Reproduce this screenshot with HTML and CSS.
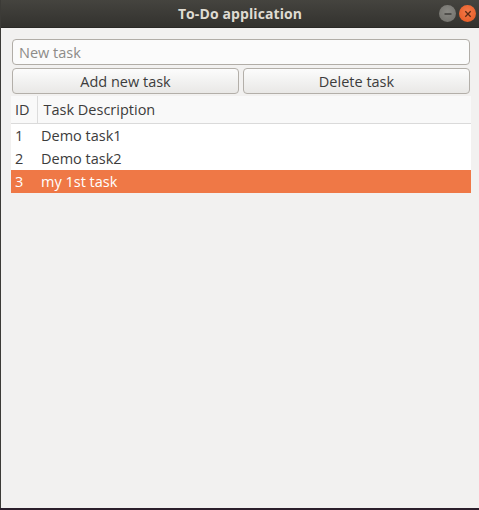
FILE: index.html
```html
<!DOCTYPE html>
<html>
<head>
<meta charset="utf-8">
<link rel="stylesheet" href="styles.css">
</head>
<body>
<div class="window">
  <header class="titlebar">
    <span class="title">To-Do application</span>
    <div class="controls">
      <span class="wbtn min"><svg width="16" height="16" viewBox="0 0 16 16"><line x1="4.5" y1="8" x2="11.5" y2="8" stroke="#3a3935" stroke-width="1.4"/></svg></span>
      <span class="wbtn close"><svg width="16" height="16" viewBox="0 0 16 16"><path d="M5.3 5.3L10.7 10.7M10.7 5.3L5.3 10.7" stroke="#5a2a14" stroke-width="1.3"/></svg></span>
    </div>
  </header>
  <main class="content">
    <input class="task-input" type="text" placeholder="New task">
    <div class="actions">
      <button class="action">Add new task</button>
      <button class="action">Delete task</button>
    </div>
    <table class="tasks">
      <thead>
        <tr><th class="col-id">ID</th><th class="col-desc">Task Description</th></tr>
      </thead>
      <tbody>
        <tr><td class="col-id">1</td><td class="col-desc">Demo task1</td></tr>
        <tr><td class="col-id">2</td><td class="col-desc">Demo task2</td></tr>
        <tr class="selected"><td class="col-id">3</td><td class="col-desc">my 1st task</td></tr>
      </tbody>
    </table>
  </main>
</div>
</body>
</html>
```

FILE: styles.css
```css
html, body {
  margin: 0;
  padding: 0;
  background: #2b1f2b;
}
.window {
  width: 479px;
  height: 508px;
  display: flex;
  flex-direction: column;
  background: #f2f1f0;
  font-family: "Open Sans", "Noto Sans", sans-serif;
  border-left: 1px solid #3c3b37;
  box-sizing: border-box;
}
.titlebar {
  height: 28px;
  flex: none;
  position: relative;
  display: flex;
  align-items: center;
  justify-content: center;
  background: linear-gradient(#45443f, #3a3935 60%, #33322e);
  border-bottom: 1px solid #2a2926;
  box-sizing: border-box;
}
.title {
  color: #dfdbd2;
  font-weight: bold;
  font-size: 14px;
  letter-spacing: 0.1px;
}
.controls {
  position: absolute;
  right: 3px;
  top: 5px;
  display: flex;
  gap: 3px;
}
.wbtn {
  width: 17px;
  height: 17px;
  border-radius: 50%;
  display: flex;
  align-items: center;
  justify-content: center;
}
.wbtn.min {
  background: radial-gradient(circle at 50% 40%, #8a8984, #6e6d68);
}
.wbtn.close {
  background: radial-gradient(circle at 50% 40%, #f47a4a, #e4561f);
}
.content {
  flex: 1;
  padding: 11px 8px 0 10px;
  display: flex;
  flex-direction: column;
}
.task-input {
  margin: 0 1px 0 1px;
  height: 26px;
  box-sizing: border-box;
  border: 1px solid #b1ada7;
  border-radius: 4px;
  background: #fbfbfb;
  padding: 0 6px;
  font-family: inherit;
  font-size: 14.5px;
  color: #3c3c3c;
}
.task-input::placeholder {
  color: #8d8b88;
}
.actions {
  margin: 3px 1px 0 1px;
  display: flex;
  gap: 4px;
}
.action {
  flex: 1;
  height: 26px;
  border: 1px solid #b3afa9;
  border-radius: 4px;
  background: linear-gradient(#fcfcfc, #f2f2f1 50%, #e9e8e6);
  font-family: inherit;
  font-size: 14.5px;
  color: #3c3c3c;
  padding: 0;
}
.tasks {
  margin-top: 2px;
  width: 460px;
  border-collapse: collapse;
  background: #ffffff;
  font-size: 14.5px;
  color: #3c3c3c;
}
.tasks th {
  height: 27px;
  padding: 0;
  font-weight: normal;
  text-align: left;
  background: #f9f9f9;
  border-bottom: 1px solid #dadada;
  box-sizing: border-box;
}
.tasks th.col-id {
  border-right: 1px solid #dcdcdc;
}
.tasks td {
  height: 23px;
  padding: 0;
}
.col-id {
  width: 26px;
  padding-left: 4px !important;
  box-sizing: border-box;
}
.col-desc {
  padding-left: 6px !important;
}
.tasks td.col-desc {
  padding-left: 4px !important;
}
.tasks tr.selected td {
  background: #ef7846;
  color: #ffffff;
}
```
